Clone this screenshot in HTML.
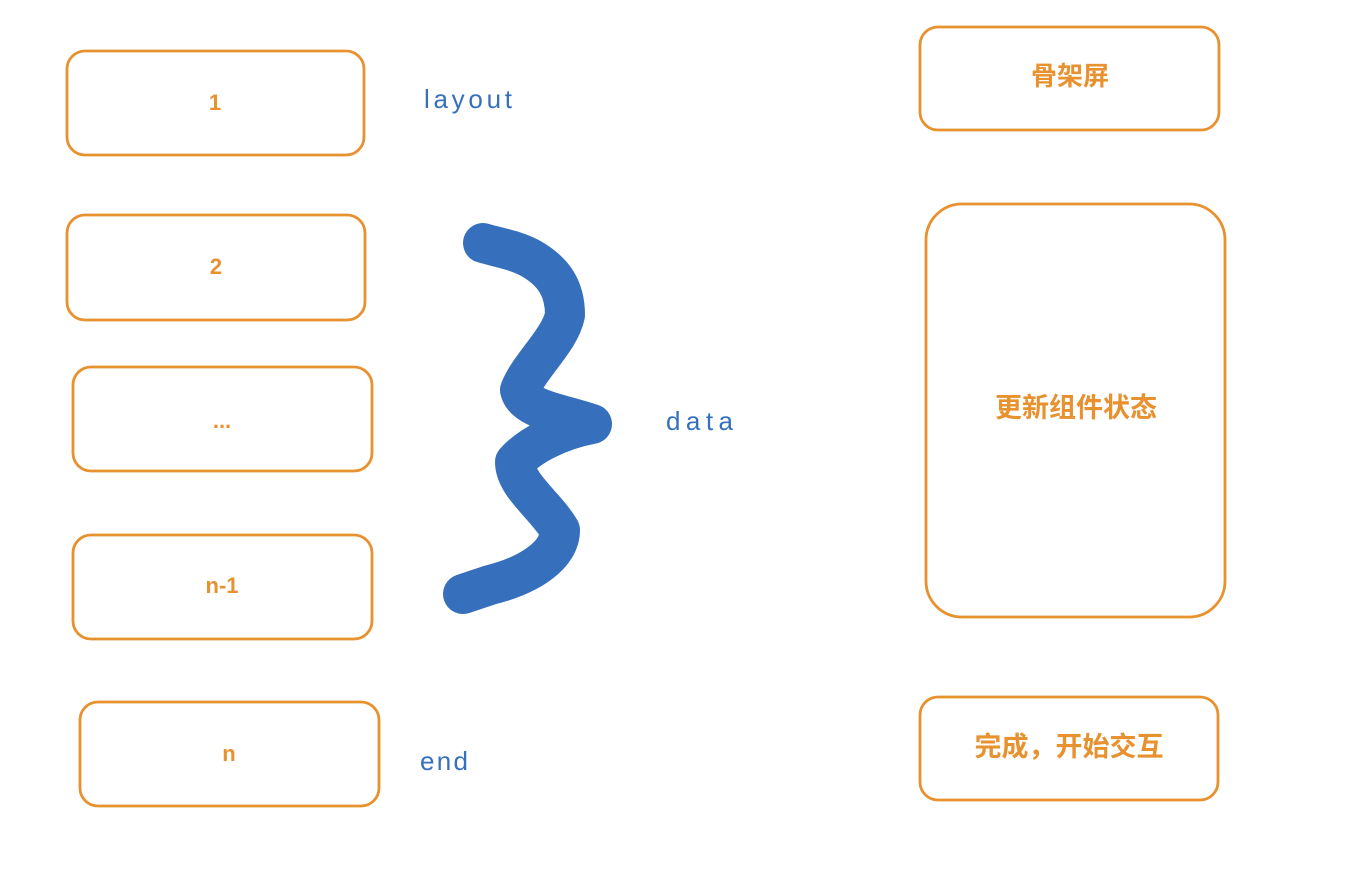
<!DOCTYPE html>
<html><head><meta charset="utf-8"><style>
html,body{margin:0;padding:0;background:#fff;width:1360px;height:870px;overflow:hidden}
svg{display:block}
text{font-family:"Liberation Sans","Noto Sans CJK SC",sans-serif}
</style></head><body>
<svg width="1360" height="870" viewBox="0 0 1360 870">
<g fill="none" stroke="#e8912f" stroke-width="2.8">
<rect x="67" y="51" width="297" height="104" rx="18"/>
<rect x="67" y="215" width="298" height="105" rx="18"/>
<rect x="73" y="367" width="299" height="104" rx="18"/>
<rect x="73" y="535" width="299" height="104" rx="18"/>
<rect x="80" y="702" width="299" height="104" rx="18"/>
<rect x="920" y="27" width="299" height="103" rx="18"/>
<rect x="926" y="204" width="299" height="413" rx="36"/>
<rect x="920" y="697" width="298" height="103" rx="18"/>
</g>
<g fill="#e8912f" font-size="22" font-weight="bold" text-anchor="middle">
<text x="215" y="110">1</text>
<text x="216" y="274">2</text>
<text x="222" y="428">...</text>
<text x="222" y="593">n-1</text>
<text x="229" y="761">n</text>
<text x="1070" y="85" font-size="26">骨架屏</text>
<text x="1076" y="417" font-size="27">更新组件状态</text>
<text x="1069" y="756" font-size="27">完成，开始交互</text>
</g>
<g fill="#3670bd" font-size="26">
<text x="424" y="108" textLength="88">layout</text>
<text x="666" y="430" textLength="67">data</text>
<text x="420" y="770" textLength="48">end</text>
</g>
<path d="M483 243 C500 248 515 250 530 258 C555 272 565 290 565 315 C560 340 530 365 520 390 C525 410 560 413 592 424 C560 430 530 445 515 462 C515 485 545 505 560 530 C560 555 530 575 490 585 L463 594" fill="none" stroke="#3670bd" stroke-width="40" stroke-linecap="round" stroke-linejoin="round"/>
</svg>
</body></html>
